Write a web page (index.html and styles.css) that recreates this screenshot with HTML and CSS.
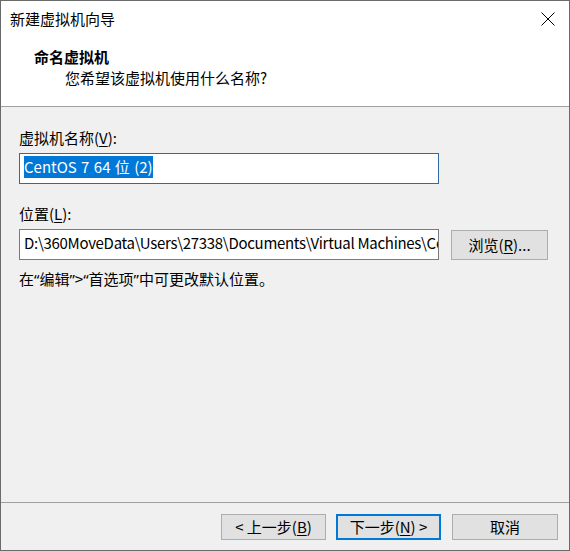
FILE: index.html
```html
<!DOCTYPE html>
<html lang="zh-CN">
<head>
<meta charset="utf-8">
<title>新建虚拟机向导</title>
<link rel="stylesheet" href="styles.css">
</head>
<body>
<div class="window">
  <div class="titlebar">
    <span class="title">新建虚拟机向导</span>
    <span class="close">
      <svg width="14" height="14" viewBox="0 0 14 14"><path d="M0.5 0.5 L13.5 13.5 M13.5 0.5 L0.5 13.5" stroke="#000" stroke-width="1" fill="none"/></svg>
    </span>
  </div>
  <div class="header">
    <div class="h-title">命名虚拟机</div>
    <div class="h-sub">您希望该虚拟机使用什么名称?</div>
  </div>
  <div class="content">
    <div class="label">虚拟机名称(<u>V</u>):</div>
    <div class="field field-focus"><span class="sel">CentOS 7 64 位 (2)</span></div>
    <div class="label label-2">位置(<u>L</u>):</div>
    <div class="row">
      <div class="field field-path"><span class="path">D:\360MoveData\Users\27338\Documents\Virtual Machines\CentOS 7 64 位 (2)</span></div>
      <div class="btn btn-browse">浏览(<u>R</u>)...</div>
    </div>
    <div class="note">在<span class="q">“</span>编辑<span class="q">”</span>&gt;<span class="q">“</span>首选项<span class="q">”</span>中可更改默认位置。</div>
  </div>
  <div class="footer">
    <div class="btn btn-wide">&lt; 上一步(<u>B</u>)</div>
    <div class="btn btn-wide btn-default">下一步(<u>N</u>) &gt;</div>
    <div class="btn btn-wide btn-cancel">取消</div>
  </div>
</div>
</body>
</html>
```
FILE: styles.css
```css
html, body {
  margin: 0;
  padding: 0;
  background: #f0f0f0;
}
body {
  font-family: "Noto Sans CJK SC", "Noto Sans", sans-serif;
  font-size: 15px;
  color: #000;
}
.window {
  width: 570px;
  height: 551px;
  box-sizing: border-box;
  border: 1px solid #6a6a6a;
  background: #f0f0f0;
  display: flex;
  flex-direction: column;
}
.titlebar {
  height: 36px;
  background: #fff;
  display: flex;
  align-items: center;
  padding-left: 9px;
}
.title {
  flex: 1;
  line-height: 20px;
}
.close {
  width: 43px;
  height: 36px;
  display: flex;
  align-items: center;
  justify-content: center;
}
.close svg {
  display: block;
}
.header {
  background: #fff;
  height: 70px;
  box-sizing: border-box;
  padding: 10px 0 0 33px;
  border-bottom: 1px solid #a0a0a0;
}
.h-title {
  font-weight: bold;
  line-height: 20px;
}
.h-sub {
  line-height: 20px;
  margin: 1px 0 0 31px;
}
.content {
  padding: 21px 0 0 18px;
}
.label {
  line-height: 20px;
}
.label-2 {
  margin-top: 20px;
}
.field {
  width: 420px;
  height: 31px;
  box-sizing: border-box;
  margin-top: 5px;
  background: #fff;
  border: 1px solid #7a7a7a;
  padding: 2px 0 0 4px;
  overflow: hidden;
  white-space: nowrap;
}
.field-focus {
  border-color: #2f6aa3;
}
.sel {
  display: inline-block;
  background: #0078d7;
  color: #fff;
  line-height: 22px;
  height: 22px;
  word-spacing: 1px;
}
.path {
  display: inline-block;
  line-height: 22px;
  letter-spacing: -0.3px;
}
.row {
  display: flex;
  align-items: flex-start;
}
.row .field {
  flex: none;
}
.btn {
  box-sizing: border-box;
  background: #e1e1e1;
  border: 1px solid #adadad;
  text-align: center;
  white-space: nowrap;
}
.btn-browse {
  width: 97px;
  height: 30px;
  line-height: 28px;
  margin: 6px 0 0 12px;
}
.q {
  font-family: "Noto Sans", sans-serif;
}
.note {
  line-height: 20px;
  margin-top: 9px;
}
.footer {
  margin-top: auto;
  border-top: 1px solid #a0a0a0;
  height: 48px;
  box-sizing: border-box;
  display: flex;
  justify-content: flex-end;
  padding: 11px 11px 0 0;
  gap: 10px;
}
.btn-wide {
  width: 105px;
  height: 26px;
  line-height: 24px;
}
.btn-default {
  border: 2px solid #0078d7;
  line-height: 22px;
}
.btn-cancel {
  width: 106px;
  margin-left: 1px;
}
u {
  text-decoration: underline;
  text-underline-offset: 2px;
}
```
